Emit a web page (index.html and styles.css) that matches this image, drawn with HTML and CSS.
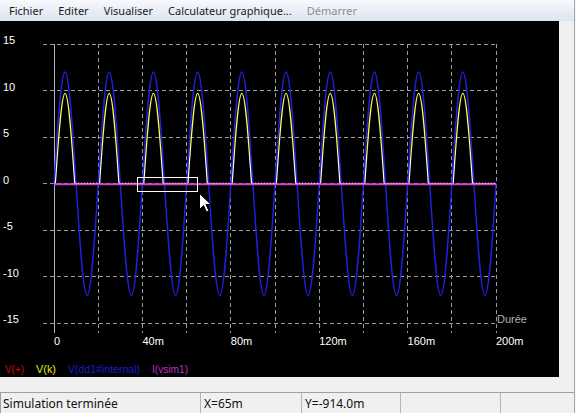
FILE: index.html
```html
<!DOCTYPE html>
<html lang="fr">
<head>
<meta charset="utf-8">
<title>Simulation</title>
<link rel="stylesheet" href="styles.css">
</head>
<body>
<div class="window">
  <nav class="menubar">
    <span class="menu">Fichier</span>
    <span class="menu">Editer</span>
    <span class="menu">Visualiser</span>
    <span class="menu">Calculateur graphique...</span>
    <span class="menu disabled">Démarrer</span>
  </nav>
  <div class="main">
    <div class="plot">
      <svg class="chart" width="559" height="356" viewBox="0 21 559 356" xmlns="http://www.w3.org/2000/svg">
        <defs>
          <linearGradient id="ygrad" gradientUnits="userSpaceOnUse" x1="0" y1="93" x2="0" y2="184">
            <stop offset="0" stop-color="#ffff40"/>
            <stop offset="0.62" stop-color="#ffff50"/>
            <stop offset="0.75" stop-color="#fffff0"/>
            <stop offset="1" stop-color="#ffffff"/>
          </linearGradient>
        </defs>
        <path class="grid" d="M43 44.5H496M43 90.5H496M43 137.5H496M43 183.5H496M43 230.5H496M43 276.5H496M43 323.5H496"/>
        <path class="grid" d="M98.5 44V333M142.5 44V333M186.5 44V333M230.5 44V333M275.5 44V333M319.5 44V333M363.5 44V333M407.5 44V333M451.5 44V333M496.5 44V333"/>
        <path class="axis" d="M54.5 44V333"/>

        <path class="trace-blue" d="M54 183.7
          c3.6 -57.2 7.05 -111.7 11.05 -111.7 c4 0 7.45 54.5 11.05 111.7 c3.6 57.2 7.05 111.7 11.05 111.7 c4 0 7.45 -54.5 11.05 -111.7
          c3.6 -57.2 7.05 -111.7 11.05 -111.7 c4 0 7.45 54.5 11.05 111.7 c3.6 57.2 7.05 111.7 11.05 111.7 c4 0 7.45 -54.5 11.05 -111.7
          c3.6 -57.2 7.05 -111.7 11.05 -111.7 c4 0 7.45 54.5 11.05 111.7 c3.6 57.2 7.05 111.7 11.05 111.7 c4 0 7.45 -54.5 11.05 -111.7
          c3.6 -57.2 7.05 -111.7 11.05 -111.7 c4 0 7.45 54.5 11.05 111.7 c3.6 57.2 7.05 111.7 11.05 111.7 c4 0 7.45 -54.5 11.05 -111.7
          c3.6 -57.2 7.05 -111.7 11.05 -111.7 c4 0 7.45 54.5 11.05 111.7 c3.6 57.2 7.05 111.7 11.05 111.7 c4 0 7.45 -54.5 11.05 -111.7
          c3.6 -57.2 7.05 -111.7 11.05 -111.7 c4 0 7.45 54.5 11.05 111.7 c3.6 57.2 7.05 111.7 11.05 111.7 c4 0 7.45 -54.5 11.05 -111.7
          c3.6 -57.2 7.05 -111.7 11.05 -111.7 c4 0 7.45 54.5 11.05 111.7 c3.6 57.2 7.05 111.7 11.05 111.7 c4 0 7.45 -54.5 11.05 -111.7
          c3.6 -57.2 7.05 -111.7 11.05 -111.7 c4 0 7.45 54.5 11.05 111.7 c3.6 57.2 7.05 111.7 11.05 111.7 c4 0 7.45 -54.5 11.05 -111.7
          c3.6 -57.2 7.05 -111.7 11.05 -111.7 c4 0 7.45 54.5 11.05 111.7 c3.6 57.2 7.05 111.7 11.05 111.7 c4 0 7.45 -54.5 11.05 -111.7
          c3.6 -57.2 7.05 -111.7 11.05 -111.7 c4 0 7.45 54.5 11.05 111.7 c3.6 57.2 7.05 111.7 11.05 111.7 c4 0 7.45 -54.5 11.05 -111.7"/>

        <path class="trace-yellow" d="M54 183.7
          h1.36 c3.16 -46.26 6.18 -90.3 9.69 -90.3 c3.51 0 6.53 44.04 9.69 90.3 h23.46
          h1.36 c3.16 -46.26 6.18 -90.3 9.69 -90.3 c3.51 0 6.53 44.04 9.69 90.3 h23.46
          h1.36 c3.16 -46.26 6.18 -90.3 9.69 -90.3 c3.51 0 6.53 44.04 9.69 90.3 h23.46
          h1.36 c3.16 -46.26 6.18 -90.3 9.69 -90.3 c3.51 0 6.53 44.04 9.69 90.3 h23.46
          h1.36 c3.16 -46.26 6.18 -90.3 9.69 -90.3 c3.51 0 6.53 44.04 9.69 90.3 h23.46
          h1.36 c3.16 -46.26 6.18 -90.3 9.69 -90.3 c3.51 0 6.53 44.04 9.69 90.3 h23.46
          h1.36 c3.16 -46.26 6.18 -90.3 9.69 -90.3 c3.51 0 6.53 44.04 9.69 90.3 h23.46
          h1.36 c3.16 -46.26 6.18 -90.3 9.69 -90.3 c3.51 0 6.53 44.04 9.69 90.3 h23.46
          h1.36 c3.16 -46.26 6.18 -90.3 9.69 -90.3 c3.51 0 6.53 44.04 9.69 90.3 h23.46
          h1.36 c3.16 -46.26 6.18 -90.3 9.69 -90.3 c3.51 0 6.53 44.04 9.69 90.3 h23.46"/>

        <path class="trace-magenta" d="M54 184.2H496"/>
        <path class="trace-noise" d="M75 183h23M119.2 183h23M163.4 183h23M207.6 183h23M251.8 183h23M296 183h23M340.2 183h23M384.4 183h23M428.6 183h23M472.8 183h23"/>

        <rect class="selection" x="137.5" y="177.5" width="60" height="14"/>
        <path class="cursor" d="M199.5 193.5V209.5L203.5 205.5L206.5 212L209 211L206 204.5H211Z"/>

        <g class="axis-label">
          <text x="3" y="44">15</text>
          <text x="3" y="90.5">10</text>
          <text x="3" y="137">5</text>
          <text x="3" y="183.7">0</text>
          <text x="3" y="230">-5</text>
          <text x="3" y="276.7">-10</text>
          <text x="3" y="323.3">-15</text>
          <text x="54" y="345">0</text>
          <text x="142.4" y="345">40m</text>
          <text x="230.8" y="345">80m</text>
          <text x="319.2" y="345">120m</text>
          <text x="407.6" y="345">160m</text>
          <text x="496" y="345">200m</text>
        </g>
        <text class="axis-name" x="497" y="323">Durée</text>

        <g class="legend">
          <text class="lg-red" x="5" y="373" textLength="19" lengthAdjust="spacingAndGlyphs">V(+)</text>
          <text class="lg-yellow" x="36" y="373" textLength="20" lengthAdjust="spacingAndGlyphs">V(k)</text>
          <text class="lg-blue" x="68" y="373" textLength="72" lengthAdjust="spacingAndGlyphs">V(dd1#internal)</text>
          <text class="lg-magenta" x="152" y="373" textLength="36" lengthAdjust="spacingAndGlyphs">I(vsim1)</text>
        </g>
      </svg>
    </div>
    <div class="side"></div>
  </div>
  <div class="spacer"></div>
  <footer class="status">
    <div class="panel p1">Simulation terminée</div>
    <div class="panel p2">X=65m</div>
    <div class="panel p3">Y=-914.0m</div>
    <div class="panel p4"></div>
    <div class="panel p5"></div>
  </footer>
</div>
</body>
</html>
```

FILE: styles.css
```css
* { box-sizing: border-box; }

html, body {
  margin: 0;
  padding: 0;
}

body {
  width: 576px;
  height: 413px;
  overflow: hidden;
  background: #f6f6f6;
}

.window {
  width: 575px;
  height: 413px;
  border-right: 1px solid #a6a6a6;
  background: #f0f0f0;
  display: flex;
  flex-direction: column;
}

.menubar {
  height: 21px;
  flex: none;
  display: flex;
  padding-left: 1.5px;
  background: linear-gradient(#f7f9fd, #e8edf6 55%, #dde5f1);
  font-family: "Noto Sans", "Open Sans", sans-serif;
  font-size: 11px;
  line-height: 22px;
  color: #1b1b1b;
}

.menu {
  padding: 0 7.5px;
}

.menu.disabled {
  color: #8e8e8e;
}

.main {
  height: 356px;
  flex: none;
  display: flex;
}

.plot {
  width: 559px;
  background: #000;
}

.chart {
  display: block;
}

.side {
  flex: 1;
  background: #f0f0f0;
}

.spacer {
  height: 15px;
  flex: none;
}

.status {
  height: 21px;
  flex: none;
  display: flex;
  border-top: 1px solid #a0a0a0;
  border-left: 1px solid #a0a0a0;
  font-family: "Noto Sans", "Open Sans", sans-serif;
  font-size: 12px;
  color: #111;
}

.panel {
  height: 20px;
  line-height: 20px;
  padding-top: 1px;
  padding-left: 3px;
  border-right: 1px solid #b6b6b6;
  white-space: nowrap;
}

.p1 { width: 200px; padding-left: 2px; }
.p2 { width: 101px; }
.p3 { width: 99px; }
.p4 { width: 100px; }
.p5 { flex: 1; border-right: none; }

/* chart */
.grid {
  fill: none;
  stroke: #9c9c9c;
  stroke-width: 1;
  stroke-dasharray: 4 3;
}

.axis {
  fill: none;
  stroke: #b4b4b4;
  stroke-width: 1;
}

.trace-blue {
  fill: none;
  stroke: #2020e4;
  stroke-width: 1.4;
}

.trace-yellow {
  fill: none;
  stroke: url(#ygrad);
  stroke-width: 1.2;
}

.trace-magenta {
  fill: none;
  stroke: #d040d0;
  stroke-width: 2;
}

.trace-noise {
  fill: none;
  stroke: #ffc8c0;
  stroke-width: 1;
  stroke-dasharray: 1 2;
}

.selection {
  fill: none;
  stroke: #ffffff;
  stroke-width: 1;
}

.cursor {
  fill: #ffffff;
  stroke: #000000;
  stroke-width: 1;
  stroke-linejoin: miter;
}

.axis-label text {
  fill: #ffffff;
  font-family: "Liberation Sans", Arial, sans-serif;
  font-size: 11px;
}

.axis-name {
  fill: #b0b0b0;
  font-family: "Liberation Sans", Arial, sans-serif;
  font-size: 11px;
}

.legend text {
  font-family: "Liberation Sans", Arial, sans-serif;
  font-size: 11px;
}

.lg-red { fill: #d00808; }
.lg-yellow { fill: #e8e820; }
.lg-blue { fill: #1c1cd8; }
.lg-magenta { fill: #c030c8; }
```
